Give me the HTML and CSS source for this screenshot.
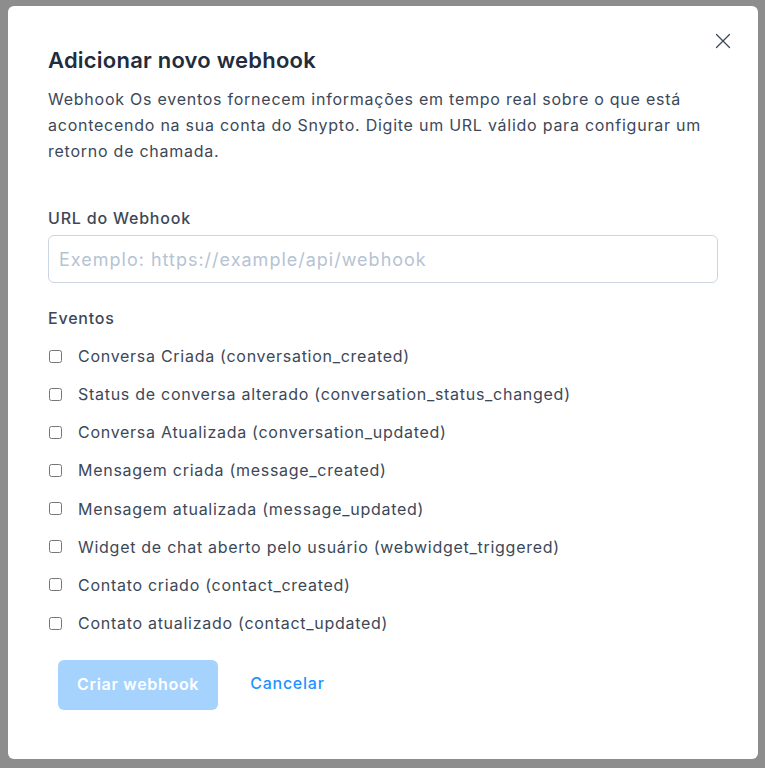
FILE: index.html
```html
<!DOCTYPE html>
<html lang="pt">
<head>
<meta charset="utf-8">
<link rel="stylesheet" href="styles.css">
</head>
<body>
<div class="modal">
  <button class="close" aria-label="Fechar">
    <svg width="16" height="16" viewBox="0 0 16 16"><path d="M1.5 1.5 L14.5 14.5 M14.5 1.5 L1.5 14.5" stroke="#3c4858" stroke-width="1.3" fill="none" stroke-linecap="round"/></svg>
  </button>
  <h2 class="title">Adicionar novo webhook</h2>
  <p class="desc">Webhook Os eventos fornecem informações em tempo real sobre o que está acontecendo na sua conta do Snypto. Digite um URL válido para configurar um retorno de chamada.</p>
  <label class="label">URL do Webhook</label>
  <input class="input" type="text" placeholder="Exemplo: https://example/api/webhook">
  <div class="label events-label">Eventos</div>
  <ul class="events">
    <li><input type="checkbox"><span>Conversa Criada (conversation_created)</span></li>
    <li><input type="checkbox"><span>Status de conversa alterado (conversation_status_changed)</span></li>
    <li><input type="checkbox"><span>Conversa Atualizada (conversation_updated)</span></li>
    <li><input type="checkbox"><span>Mensagem criada (message_created)</span></li>
    <li><input type="checkbox"><span>Mensagem atualizada (message_updated)</span></li>
    <li><input type="checkbox"><span>Widget de chat aberto pelo usuário (webwidget_triggered)</span></li>
    <li><input type="checkbox"><span>Contato criado (contact_created)</span></li>
    <li><input type="checkbox"><span>Contato atualizado (contact_updated)</span></li>
  </ul>
  <div class="actions">
    <button class="btn-primary" disabled>Criar webhook</button>
    <button class="btn-link">Cancelar</button>
  </div>
</div>
</body>
</html>
```
FILE: styles.css
```css
html, body {
  margin: 0;
  padding: 0;
  background: #8d8d8d;
  font-family: Inter, "Noto Sans", sans-serif;
}
.modal {
  position: relative;
  box-sizing: border-box;
  width: 750px;
  height: 753px;
  margin: 6px 0 0 8px;
  background: #fff;
  border-radius: 6px;
  padding: 39px 40px 0 40px;
}
.close {
  position: absolute;
  top: 27px;
  right: 27px;
  border: 0;
  background: none;
  padding: 0;
  width: 16px;
  height: 16px;
  cursor: pointer;
}
.close svg { display: block; }
.title {
  margin: 0;
  font-size: 22px;
  font-weight: 600;
  line-height: 30px;
  letter-spacing: 0.22px;
  color: #1f2d3d;
}
.desc {
  margin: 11px 0 0 0;
  font-size: 16px;
  line-height: 26px;
  letter-spacing: 0.75px;
  color: #3c4858;
}
.label {
  display: block;
  margin-top: 42px;
  font-size: 16px;
  font-weight: 500;
  line-height: 24px;
  letter-spacing: 0.8px;
  color: #3c4858;
}
.input {
  box-sizing: border-box;
  display: block;
  width: 670px;
  height: 48px;
  margin-top: 5px;
  border: 1px solid #cbd6e2;
  border-radius: 6px;
  padding: 0 10px;
  font-family: inherit;
  font-size: 18px;
  letter-spacing: 1px;
  color: #3c4858;
  outline: none;
}
.input::placeholder { color: #b6c3d2; }
.events-label { margin-top: 23px; }
.events {
  list-style: none;
  margin: 7px 0 0 0;
  padding: 0;
}
.events li {
  display: flex;
  align-items: center;
  height: 38.15px;
  font-size: 16px;
  letter-spacing: 0.72px;
  color: #3c4858;
}
.events input {
  margin: 0 16px 0 1px;
  width: 13px;
  height: 13px;
}
.actions {
  display: flex;
  align-items: center;
  gap: 32px;
  margin-top: 18px;
  padding-left: 10px;
}
.btn-primary {
  height: 50px;
  padding: 0 19px 3px 19px;
  border: 0;
  border-radius: 6px;
  background: #a5d3fe;
  color: #fff;
  font-family: inherit;
  font-size: 16px;
  font-weight: 600;
  letter-spacing: 0.7px;
}
.btn-link {
  border: 0;
  background: none;
  padding: 0 0 4px 0;
  color: #1f93ff;
  font-family: inherit;
  font-size: 16px;
  font-weight: 500;
  letter-spacing: 0.75px;
  cursor: pointer;
}
```
